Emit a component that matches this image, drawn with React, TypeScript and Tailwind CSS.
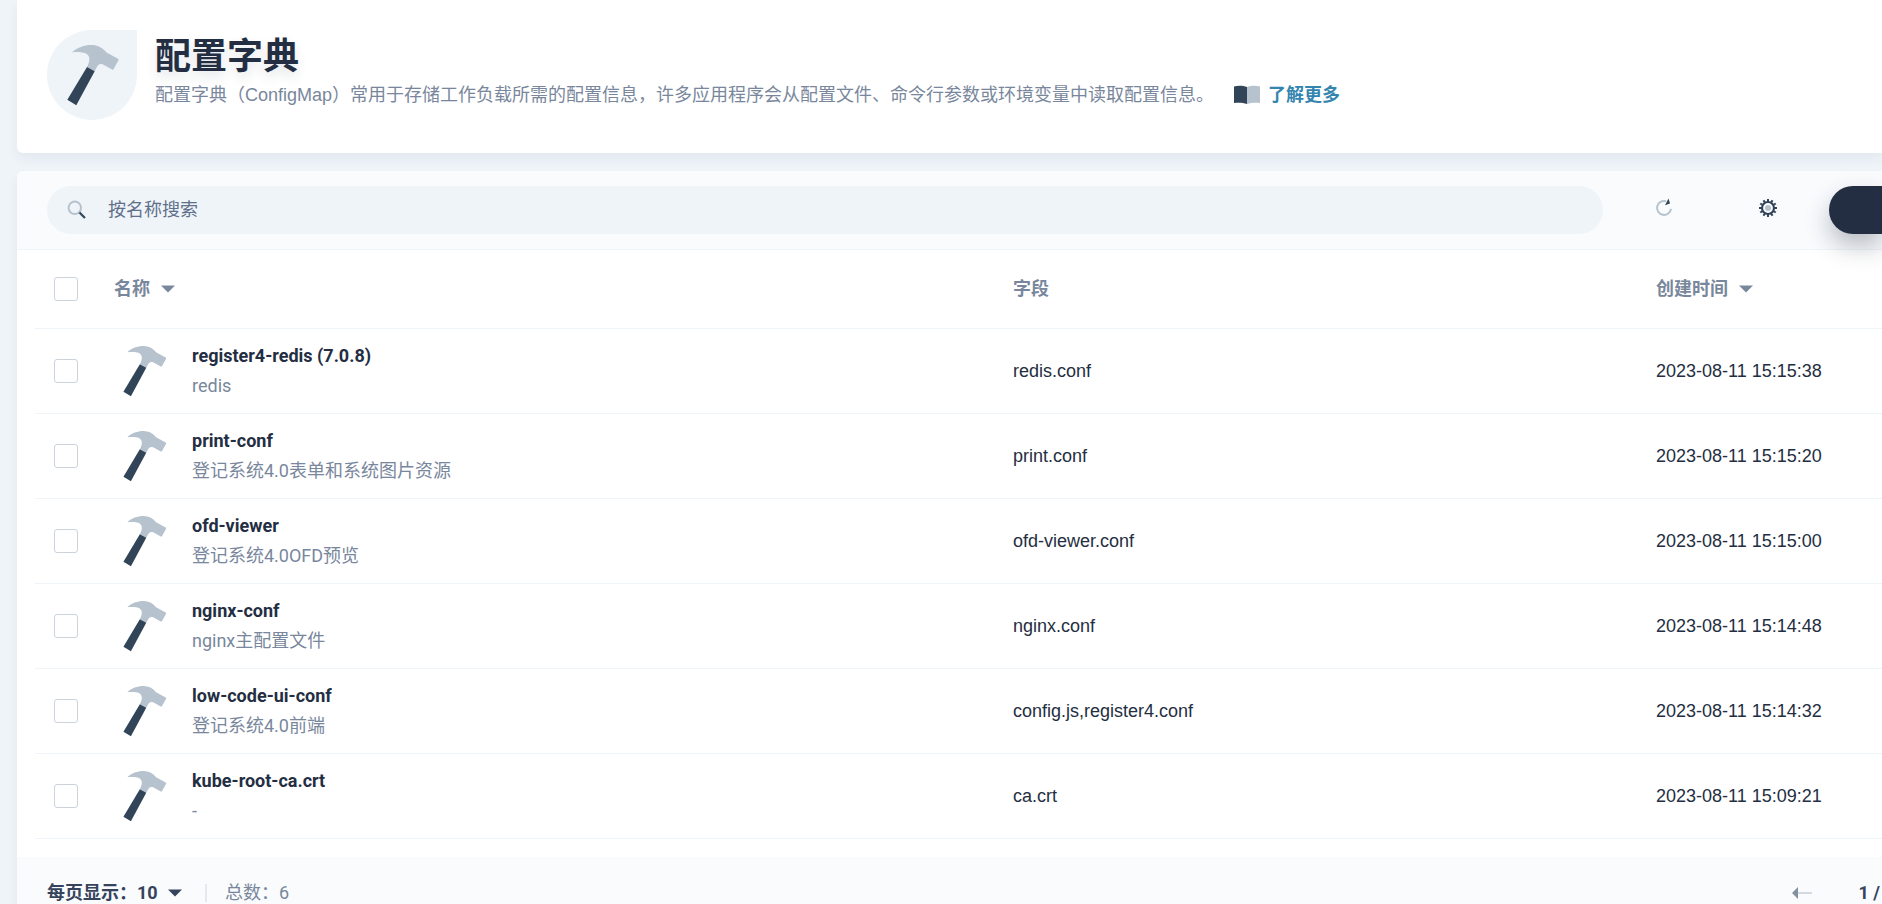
import { useState } from "react";

type ConfigMap = {
  name: string;
  description: string;
  fields: string;
  createdAt: string;
};

const CONFIG_MAPS: ConfigMap[] = [
  { name: "register4-redis (7.0.8)", description: "redis", fields: "redis.conf", createdAt: "2023-08-11 15:15:38" },
  { name: "print-conf", description: "登记系统4.0表单和系统图片资源", fields: "print.conf", createdAt: "2023-08-11 15:15:20" },
  { name: "ofd-viewer", description: "登记系统4.0OFD预览", fields: "ofd-viewer.conf", createdAt: "2023-08-11 15:15:00" },
  { name: "nginx-conf", description: "nginx主配置文件", fields: "nginx.conf", createdAt: "2023-08-11 15:14:48" },
  { name: "low-code-ui-conf", description: "登记系统4.0前端", fields: "config.js,register4.conf", createdAt: "2023-08-11 15:14:32" },
  { name: "kube-root-ca.crt", description: "-", fields: "ca.crt", createdAt: "2023-08-11 15:09:21" },
];

function HammerIcon({ className }: { className: string }) {
  return (
    <svg aria-hidden="true" viewBox="0 0 72 72" className={className}>
      <path
        d="M16 13.500C21 8.500 28 6 35.500 6c6 0 11 2.500 15 7.500l11.500 6.300c.6.300.8.900.5 1.500l-5 8.900c-.3.500-.9.700-1.400.4L47 25.500c-2.500-1-4.500-.3-5.800 2L38.700 32.200 31 28c1.500-3 2.700-6 2.300-9-.6-3.700-4-5.500-8.800-5.800-3-.2-6-.1-8.500.3z"
        fill="#b6c2cd"
      />
      <path d="M31 28l7.700 4.200L20.300 66.300l-9-5.500z" fill="#324558" />
    </svg>
  );
}

function BookIcon() {
  return (
    <svg aria-hidden="true" viewBox="0 0 26 20" className="h-5 w-[26px] shrink-0">
      <path d="M0 1.500C4 .4 9 .5 13 2v17C9 17.500 4 17.500 0 18z" fill="#324558" />
      <path d="M26 1.500C22 .4 17 .5 13 2v17c4-1.500 9-1.500 13-1z" fill="#b6c2cd" />
    </svg>
  );
}

function SearchIcon() {
  return (
    <svg aria-hidden="true" viewBox="0 0 20 20" fill="none" className="h-5 w-5 shrink-0">
      <circle cx="7.800" cy="7.800" r="6.200" stroke="#b6c2cd" strokeWidth="2" />
      <path d="m12.500 12.500 5.500 5.500" stroke="#324558" strokeWidth="2.200" />
    </svg>
  );
}

function RefreshIcon() {
  return (
    <svg aria-hidden="true" viewBox="0 0 20 20" fill="none" className="h-5 w-5">
      <path d="M12 3.200A7 7 0 1 0 17 10.800" stroke="#b6c2cd" strokeWidth="2" />
      <path d="M14.500.5L16 5.500l-5 1.800z" fill="#324558" />
    </svg>
  );
}

const GEAR_TEETH = [0, 30, 60, 90, 120, 150, 180, 210, 240, 270, 300, 330];

function GearIcon() {
  return (
    <svg aria-hidden="true" viewBox="0 0 20 20" fill="none" className="h-5 w-5">
      <circle cx="10" cy="10" r="6" stroke="#324558" strokeWidth="2.200" />
      {GEAR_TEETH.map((angle) => (
        <path key={angle} d="M10 1v3" stroke="#324558" strokeWidth="2" transform={`rotate(${angle} 10 10)`} />
      ))}
      <circle cx="10" cy="10" r="3" fill="#b6c2cd" />
    </svg>
  );
}

function Caret() {
  return (
    <svg aria-hidden="true" viewBox="0 0 14 8" className="h-2 w-3.5 shrink-0">
      <path d="M0 .5h14L7 7.500z" fill="currentColor" />
    </svg>
  );
}

const checkboxClass =
  "block h-6 w-6 appearance-none rounded-[3px] border border-[#ccd3db] bg-white checked:border-[#329dce] checked:bg-[#329dce]";

export default function App() {
  const [query, setQuery] = useState("");
  const [selected, setSelected] = useState<string[]>([]);

  const rows = CONFIG_MAPS.filter((item) => item.name.includes(query.trim()));
  const allSelected = rows.length > 0 && rows.every((item) => selected.includes(item.name));

  const toggle = (name: string) => {
    setSelected((prev) =>
      prev.includes(name) ? prev.filter((entry) => entry !== name) : [...prev, name],
    );
  };

  return (
    <main className="flex h-screen flex-col gap-[18px] overflow-hidden bg-[#eff4f9] pl-[17px] font-[Roboto,'Noto_Sans_CJK_SC',sans-serif] text-lg leading-[30px] text-[#242e42]">
      <header className="flex shrink-0 items-start gap-[18px] rounded-bl-md bg-white px-[30px] pt-[30px] pb-[33px] shadow-[0_6px_12px_0_rgba(36,46,66,0.06)]">
        <div className="flex h-[90px] w-[90px] shrink-0 items-center justify-center rounded-full rounded-tr-none bg-[#eff4f9]">
          <HammerIcon className="h-[72px] w-[72px]" />
        </div>
        <div className="min-w-0 pt-1">
          <h1 className="text-4xl leading-[46px] font-bold [text-shadow:0_6px_12px_rgba(36,46,66,0.12)]">
            配置字典
          </h1>
          <div className="flex items-center gap-5 font-['Liberation_Sans','Noto_Sans_CJK_SC',sans-serif] text-[#79879c]">
            <p>
              配置字典（ConfigMap）常用于存储工作负载所需的配置信息，许多应用程序会从配置文件、命令行参数或环境变量中读取配置信息。
            </p>
            <a href="#" className="flex shrink-0 items-center gap-2 font-bold text-[#3385b0]">
              <BookIcon />
              了解更多
            </a>
          </div>
        </div>
      </header>

      <section className="flex-1 rounded-tl-md bg-white shadow-[0_6px_12px_0_rgba(36,46,66,0.06)]">
        <div className="flex items-start rounded-tl-md border-b border-[#eff4f9] bg-[#f9fbfd] py-[15px] pl-[30px]">
          <label className="flex h-12 flex-1 items-center gap-[21px] rounded-full bg-[#eff4f9] px-5">
            <SearchIcon />
            <input
              type="text"
              aria-label="按名称搜索"
              placeholder="按名称搜索"
              value={query}
              onChange={(event) => setQuery(event.target.value)}
              className="min-w-0 flex-1 bg-transparent outline-none placeholder:text-[#5f708a]"
            />
          </label>
          <div className="flex px-[9px]">
            <button type="button" aria-label="刷新" className="flex h-11 w-[104px] items-center justify-center">
              <RefreshIcon />
            </button>
            <button type="button" aria-label="设置" className="flex h-11 w-[104px] items-center justify-center">
              <GearIcon />
            </button>
          </div>
          <button
            type="button"
            aria-label="创建"
            className="h-12 w-[53px] rounded-l-full bg-[#242e42] shadow-[0_12px_24px_0_rgba(36,46,66,0.3)]"
          />
        </div>

        <div className="pb-[18px] pl-[18px]">
          <table className="w-full table-fixed border-collapse text-left">
            <thead>
              <tr className="h-[78px] border-b border-[#eff4f9] text-[#79879c]">
                <th className="w-[61px] pl-[19px]">
                  <input
                    type="checkbox"
                    aria-label="全选"
                    checked={allSelected}
                    onChange={() => setSelected(allSelected ? [] : rows.map((item) => item.name))}
                    className={checkboxClass}
                  />
                </th>
                <th className="px-[18px]">
                  <button type="button" className="flex items-center gap-[11px] font-bold">
                    名称
                    <Caret />
                  </button>
                </th>
                <th className="w-[643px] px-[18px] font-bold">字段</th>
                <th className="w-[244px] px-[18px]">
                  <button type="button" className="flex items-center gap-[11px] font-bold">
                    创建时间
                    <Caret />
                  </button>
                </th>
              </tr>
            </thead>
            <tbody>
              {rows.map((item) => (
                <tr key={item.name} className="h-[85px] border-b border-[#eff4f9]">
                  <td className="pl-[19px]">
                    <input
                      type="checkbox"
                      aria-label={item.name}
                      checked={selected.includes(item.name)}
                      onChange={() => toggle(item.name)}
                      className={checkboxClass}
                    />
                  </td>
                  <td className="px-[18px]">
                    <div className="flex items-center gap-[18px]">
                      <HammerIcon className="h-[60px] w-[60px] shrink-0" />
                      <div>
                        <a href="#" className="block font-bold">
                          {item.name}
                        </a>
                        <p className="text-[#79879c]">{item.description}</p>
                      </div>
                    </div>
                  </td>
                  <td className="px-[18px] font-['Liberation_Sans',sans-serif]">{item.fields}</td>
                  <td className="px-[18px] font-['Liberation_Sans',sans-serif] whitespace-nowrap">{item.createdAt}</td>
                </tr>
              ))}
            </tbody>
          </table>
        </div>

        <footer className="flex h-[72px] items-center justify-between bg-[#f9fbfd] pr-0.5 pl-[30px]">
          <div className="flex items-center">
            <label htmlFor="page-size" className="font-bold text-[#36435c]">
              每页显示：
            </label>
            <div className="flex items-center gap-2.5 text-[#36435c]">
              <select id="page-size" defaultValue="10" className="appearance-none bg-transparent font-bold">
                <option value="10">10</option>
              </select>
              <Caret />
            </div>
            <span className="mr-[18px] ml-[23px] h-[18px] w-0.5 bg-[#e3e9ef]" />
            <span className="text-[#79879c]">总数：{CONFIG_MAPS.length}</span>
          </div>
          <div className="flex items-center gap-[47px]">
            <button type="button" aria-label="上一页">
              <svg aria-hidden="true" viewBox="0 0 20 12" className="h-3 w-5">
                <path d="M6 5h14v2H6z" fill="#d3dae1" />
                <path d="M6 0v12L0 6z" fill="#8390a0" />
              </svg>
            </button>
            <span className="font-bold text-[#36435c]">1 /</span>
          </div>
        </footer>
      </section>
    </main>
  );
}
